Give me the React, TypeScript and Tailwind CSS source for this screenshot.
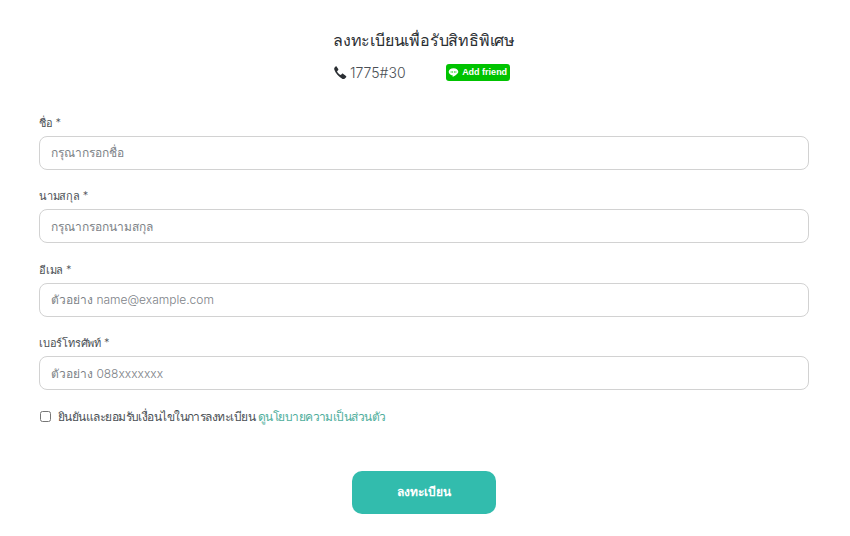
const fields = [
  { label: "ชื่อ *", placeholder: "กรุณากรอกชื่อ", type: "text" },
  { label: "นามสกุล *", placeholder: "กรุณากรอกนามสกุล", type: "text" },
  { label: "อีเมล *", placeholder: "ตัวอย่าง name@example.com", type: "email" },
  { label: "เบอร์โทรศัพท์ *", placeholder: "ตัวอย่าง 088xxxxxxx", type: "tel" },
];

function PhoneIcon() {
  return (
    <svg viewBox="0 0 24 24" className="h-[15px] w-[15px] fill-[#2b2f33]">
      <path d="M6.6 1.6 10 6.4c.4.6.3 1.3-.2 1.8L8 10c.9 2.4 3.6 5.200 6 6l1.800-1.800c.5-.5 1.300-.6 1.800-.2l4.800 3.400c.7.5.8 1.500.2 2.100l-2 2c-1 1-2.400 1.300-3.700.9C10.400 18.400 5.600 13.600 3.600 7.100 3.200 5.800 3.500 4.400 4.500 3.400l2-1.900c.1 0 .1.100.1.100Z" />
    </svg>
  );
}

function LineIcon() {
  return (
    <svg viewBox="0 0 24 24" className="h-[11px] w-[11px]">
      <path
        className="fill-white"
        d="M12 2.500C6 2.500 1.500 6.100 1.500 10.500c0 3.900 3.600 7.200 8.500 7.800.9.200.7 1-.1 2.900 0 .4.300.5.700.3 3.500-2 11.900-6 11.900-11 0-4.400-4.500-8-10.500-8Z"
      />
      <path className="fill-[#00c300]" d="M6 9h1.500v3.500H6zM9.500 9H11v3.500H9.500zM13 9h1.500v3.500H13zM16.500 9H18v3.500h-1.500z" />
    </svg>
  );
}

export default function App() {
  return (
    <div className="min-h-[536px] bg-white pr-[41px] pl-[39px] pt-[28px] font-['Inter','Noto_Sans',sans-serif] text-[#33383d]">
      <h1 className="text-center text-[16px] leading-[24px] font-medium tracking-[-0.2px] text-[#2b2f33]">
        ลงทะเบียนเพื่อรับสิทธิพิเศษ
      </h1>
      <div className="mt-[10px] ml-[293px] flex h-[20px] items-center">
        <PhoneIcon />
        <span className="ml-[3px] text-[14px] font-light text-[#4a4f54]">1775#30</span>
        <a className="mt-[1px] ml-[40px] flex h-[17px] w-[64px] items-center justify-center gap-[3px] rounded-[3px] bg-[#00c300] font-['Liberation_Sans',sans-serif] text-[9px] font-bold text-white">
          <LineIcon />
          Add friend
        </a>
      </div>

      <form className="mt-[29.750px]">
        <div className="flex flex-col gap-[15.500px]">
          {fields.map((field) => (
            <div key={field.label}>
              <label className="mt-[2px] block text-[11px] leading-[18px] font-light tracking-[-0.2px] text-[#4a4f54]">{field.label}</label>
              <input
                type={field.type}
                placeholder={field.placeholder}
                className="mt-[4px] block h-[34px] w-full rounded-[8px] border border-[#d2d2d2] px-[11px] text-[12px] font-light outline-none placeholder:text-[#7d8287]"
              />
            </div>
          ))}
        </div>

        <label className="mt-[17.500px] flex h-[18px] items-center text-[12px] font-light tracking-[-0.55px] text-[#4a4f54]">
          <input type="checkbox" className="ml-[1px] h-[11px] w-[11px]" />
          <span className="ml-[7px]">ยินยันและยอมรับเงื่อนไขในการลงทะเบียน</span>
          <a className="ml-[3px] text-[#4fae9c]">ดูนโยบายความเป็นส่วนตัว</a>
        </label>

        <button
          type="button"
          className="mx-auto mt-[45px] block h-[43px] w-[144px] rounded-[10px] bg-[#32bcad] text-[12px] font-semibold text-white"
        >
          ลงทะเบียน
        </button>
      </form>
    </div>
  );
}
